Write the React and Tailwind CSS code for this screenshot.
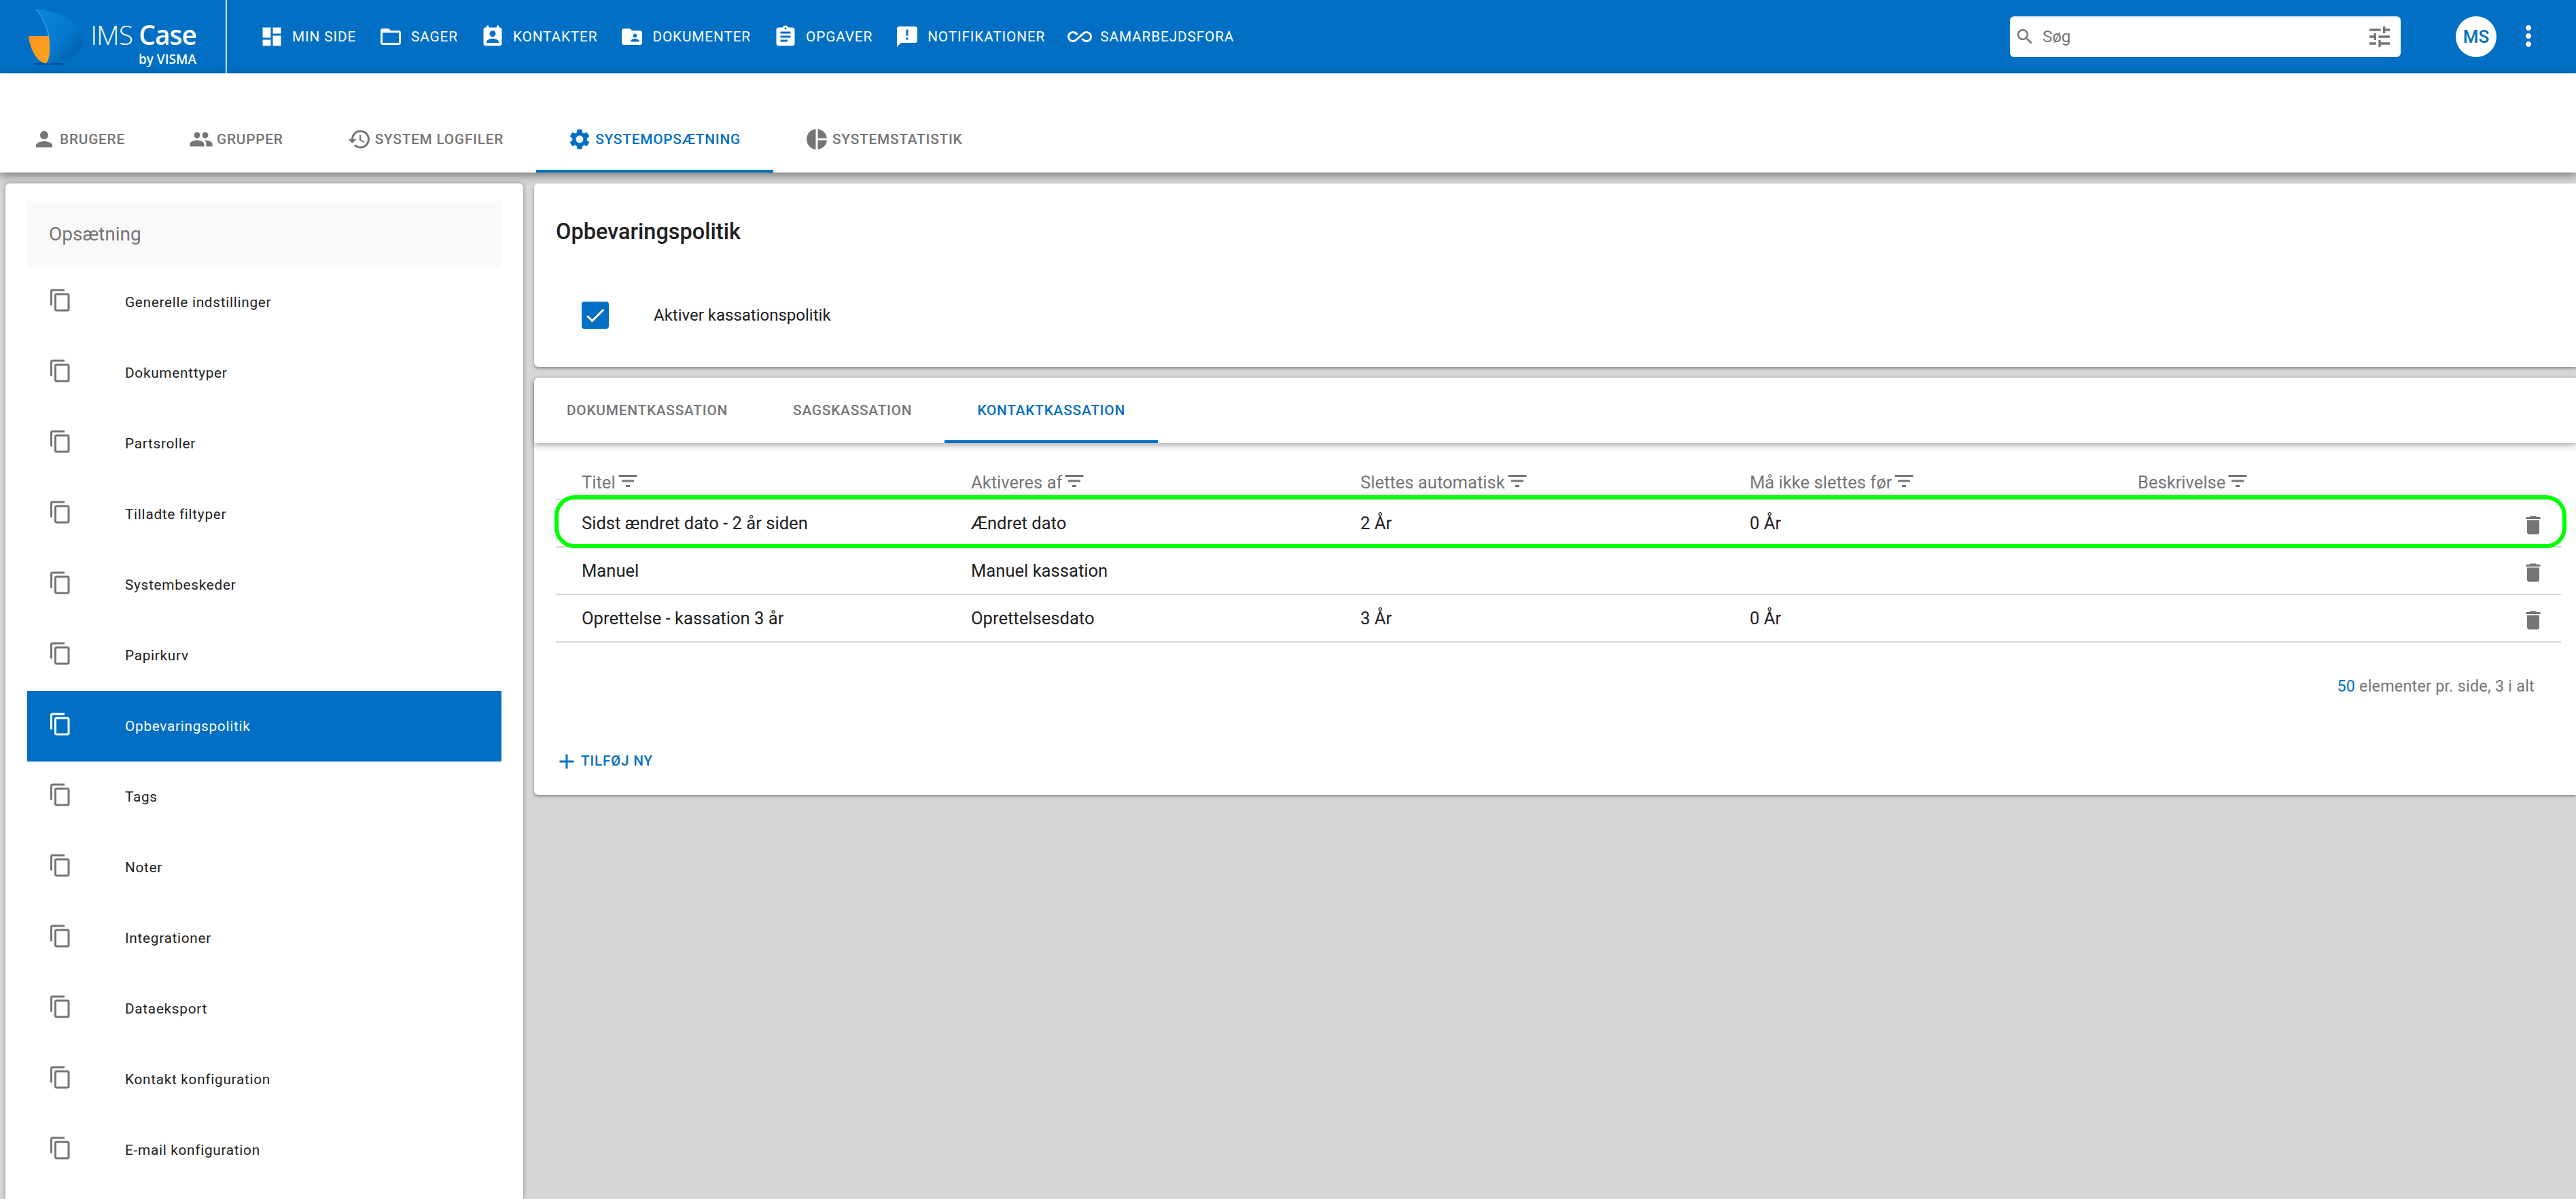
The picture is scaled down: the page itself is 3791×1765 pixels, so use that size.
import React from "react";

const P = {
  dashboard: "M3 13h8V3H3v10zm0 8h8v-6H3v6zm10 0h8V11h-8v10zm0-18v6h8V3h-8z",
  folder: "M20 6h-8l-2-2H4c-1.1 0-1.99.9-1.99 2L2 18c0 1.1.9 2 2 2h16c1.1 0 2-.9 2-2V8c0-1.1-.9-2-2-2zm0 12H4V8h16v10z",
  contact: "M19 3h-1V1h-2v2H8V1H6v2H5c-1.11 0-2 .9-2 2v14c0 1.1.89 2 2 2h14c1.1 0 2-.9 2-2V5c0-1.1-.9-2-2-2zm-7 3c1.66 0 3 1.34 3 3s-1.34 3-3 3-3-1.34-3-3 1.34-3 3-3zm6 12H6v-1c0-2 4-3.1 6-3.1s6 1.1 6 3.1v1z",
  shared: "M20 6h-8l-2-2H4c-1.1 0-1.99.9-1.99 2L2 18c0 1.1.9 2 2 2h16c1.1 0 2-.9 2-2V8c0-1.1-.9-2-2-2zm-5 3c1.1 0 2 .9 2 2s-.9 2-2 2-2-.9-2-2 .9-2 2-2zm4 8h-8v-1c0-1.33 2.67-2 4-2s4 .67 4 2v1z",
  assignment: "M19 3h-4.18C14.4 1.84 13.3 1 12 1c-1.3 0-2.4.84-2.82 2H5c-1.1 0-2 .9-2 2v14c0 1.1.9 2 2 2h14c1.1 0 2-.9 2-2V5c0-1.1-.9-2-2-2zm-7 0c.55 0 1 .45 1 1s-.45 1-1 1-1-.45-1-1 .45-1 1-1zm2 14H7v-2h7v2zm3-4H7v-2h10v2zm0-4H7V7h10v2z",
  announcement: "M20 2H4c-1.1 0-1.99.9-1.99 2L2 22l4-4h14c1.1 0 2-.9 2-2V4c0-1.1-.9-2-2-2zm-7 9h-2V5h2v6zm0 4h-2v-2h2v2z",
  infinity: "M18.6 6.62c-1.44 0-2.8.56-3.77 1.53L12 10.66 10.48 12h.01L7.8 14.39c-.64.64-1.49.99-2.4.99-1.87 0-3.39-1.51-3.39-3.38S3.53 8.62 5.4 8.62c.91 0 1.76.35 2.44 1.03l1.13 1 1.51-1.34L9.22 8.2C8.2 7.18 6.84 6.62 5.4 6.62 2.42 6.62 0 9.04 0 12s2.42 5.38 5.4 5.38c1.44 0 2.8-.56 3.77-1.53l2.83-2.5.01.01L13.52 12h-.01l2.69-2.39c.64-.64 1.49-.99 2.4-.99 1.87 0 3.39 1.51 3.39 3.38s-1.52 3.38-3.39 3.38c-.9 0-1.76-.35-2.44-1.03l-1.14-1.01-1.51 1.34 1.27 1.12c1.02 1.01 2.37 1.57 3.82 1.57 2.98 0 5.4-2.41 5.4-5.38s-2.42-5.37-5.4-5.37z",
  person: "M12 12c2.21 0 4-1.79 4-4s-1.79-4-4-4-4 1.79-4 4 1.79 4 4 4zm0 2c-2.67 0-8 1.34-8 4v2h16v-2c0-2.66-5.33-4-8-4z",
  group: "M16 11c1.66 0 2.99-1.34 2.99-3S17.66 5 16 5c-1.66 0-3 1.34-3 3s1.34 3 3 3zm-8 0c1.66 0 2.99-1.34 2.99-3S9.66 5 8 5C6.34 5 5 6.34 5 8s1.34 3 3 3zm0 2c-2.33 0-7 1.17-7 3.5V19h14v-2.5c0-2.33-4.67-3.5-7-3.5zm8 0c-.29 0-.62.02-.97.05 1.16.84 1.97 1.97 1.97 3.45V19h6v-2.5c0-2.33-4.67-3.5-7-3.5z",
  history: "M13 3c-4.97 0-9 4.03-9 9H1l3.89 3.89.07.14L9 12H6c0-3.87 3.13-7 7-7s7 3.13 7 7-3.13 7-7 7c-1.93 0-3.68-.79-4.94-2.06l-1.42 1.42C8.27 19.99 10.51 21 13 21c4.97 0 9-4.03 9-9s-4.03-9-9-9zm-1 5v5l4.28 2.54.72-1.21-3.5-2.08V8H12z",
  settings: "M19.14 12.94c.04-.3.06-.61.06-.94 0-.32-.02-.64-.07-.94l2.03-1.58c.18-.14.23-.41.12-.61l-1.92-3.32c-.12-.22-.37-.29-.59-.22l-2.39.96c-.5-.38-1.03-.7-1.62-.94l-.36-2.54c-.04-.24-.24-.41-.48-.41h-3.84c-.24 0-.43.17-.47.41l-.36 2.54c-.59.24-1.13.57-1.62.94l-2.39-.96c-.22-.08-.47 0-.59.22L2.74 8.87c-.12.21-.08.47.12.61l2.03 1.58c-.05.3-.09.63-.09.94s.02.64.07.94l-2.03 1.58c-.18.14-.23.41-.12.61l1.92 3.32c.12.22.37.29.59.22l2.39-.96c.5.38 1.03.7 1.62.94l.36 2.54c.05.24.24.41.48.41h3.84c.24 0 .44-.17.47-.41l.36-2.54c.59-.24 1.13-.56 1.62-.94l2.39.96c.22.08.47 0 .59-.22l1.92-3.32c.12-.22.07-.47-.12-.61l-2.01-1.58zM12 15.6c-1.98 0-3.6-1.62-3.6-3.6s1.62-3.6 3.6-3.6 3.6 1.62 3.6 3.6-1.62 3.6-3.6 3.6z",
  pie: "M11 2v20c-5.07-.5-9-4.79-9-10s3.93-9.5 9-10zm2.03 0v8.99H22c-.47-4.74-4.24-8.52-8.97-8.99zm0 11.01V22c4.74-.47 8.5-4.25 8.97-8.99h-8.97z",
  search: "M15.5 14h-.79l-.28-.27C15.41 12.59 16 11.11 16 9.5 16 5.91 13.09 3 9.5 3S3 5.91 3 9.5 5.91 16 9.5 16c1.61 0 3.09-.59 4.23-1.57l.27.28v.79l5 4.99L20.49 19l-4.99-5zm-6 0C7.01 14 5 11.99 5 9.5S7.01 5 9.5 5 14 7.01 14 9.5 11.99 14 9.5 14z",
  tune: "M3 17v2h6v-2H3zM3 5v2h10V5H3zm10 16v-2h8v-2h-8v-2h-2v6h2zM7 9v2H3v2h4v2h2V9H7zm14 4v-2H11v2h10zm-6-4h2V7h4V5h-4V3h-2v6z",
  more: "M12 8c1.1 0 2-.9 2-2s-.9-2-2-2-2 .9-2 2 .9 2 2 2zm0 2c-1.1 0-2 .9-2 2s.9 2 2 2 2-.9 2-2-.9-2-2-2zm0 6c-1.1 0-2 .9-2 2s.9 2 2 2 2-.9 2-2-.9-2-2-2z",
  filter: "M10 18h4v-2h-4v2zM3 6v2h18V6H3zm3 7h12v-2H6v2z",
  del: "M6 19c0 1.1.9 2 2 2h8c1.1 0 2-.9 2-2V7H6v12zM19 4h-3.5l-1-1h-5l-1 1H5v2h14V4z",
  add: "M19 13h-6v6h-2v-6H5v-2h6V5h2v6h6v2z",
  copy: "M16 1H4c-1.1 0-2 .9-2 2v14h2V3h12V1zm3 4H8c-1.1 0-2 .9-2 2v14c0 1.1.9 2 2 2h11c1.1 0 2-.9 2-2V7c0-1.1-.9-2-2-2zm0 16H8V7h11v14z",
  check: "M9 16.17L4.83 12l-1.42 1.41L9 19 21 7l-1.41-1.41z",
};

function Icon({ d, className = "w-9 h-9" }) {
  return (
    <svg viewBox="0 0 24 24" fill="currentColor" className={`shrink-0 ${className}`}>
      <path d={d} />
    </svg>
  );
}

const nav = [
  ["dashboard", "MIN SIDE"],
  ["folder", "SAGER"],
  ["contact", "KONTAKTER"],
  ["shared", "DOKUMENTER"],
  ["assignment", "OPGAVER"],
  ["announcement", "NOTIFIKATIONER"],
  ["infinity", "SAMARBEJDSFORA"],
];

const topTabs = [
  ["person", "BRUGERE"],
  ["group", "GRUPPER"],
  ["history", "SYSTEM LOGFILER"],
  ["settings", "SYSTEMOPSÆTNING", true],
  ["pie", "SYSTEMSTATISTIK"],
];

const side = [
  "Generelle indstillinger",
  "Dokumenttyper",
  "Partsroller",
  "Tilladte filtyper",
  "Systembeskeder",
  "Papirkurv",
  "Opbevaringspolitik",
  "Tags",
  "Noter",
  "Integrationer",
  "Dataeksport",
  "Kontakt konfiguration",
  "E-mail konfiguration",
];

const cols = ["Titel", "Aktiveres af", "Slettes automatisk", "Må ikke slettes før", "Beskrivelse"];
const rows = [
  ["Sidst ændret dato - 2 år siden", "Ændret dato", "2 År", "0 År", ""],
  ["Manuel", "Manuel kassation", "", "", ""],
  ["Oprettelse - kassation 3 år", "Oprettelsesdato", "3 År", "0 År", ""],
];

function Logo() {
  return (
    <svg viewBox="0 0 132 108" className="w-[132px] h-[108px] shrink-0">
      <defs>
        <linearGradient id="sail" x1="0" y1="0" x2="1" y2="1">
          <stop offset="0" stopColor="#0a86dc" />
          <stop offset="0.55" stopColor="#0478cc" />
          <stop offset="1" stopColor="#00589f" />
        </linearGradient>
        <linearGradient id="orange" x1="0" y1="0" x2="1" y2="1">
          <stop offset="0" stopColor="#f7931e" />
          <stop offset="1" stopColor="#ffa31f" />
        </linearGradient>
      </defs>
      <ellipse cx="72" cy="94" rx="24" ry="1.6" fill="#004f8f" />
      <path d="M53 13 C 90 17 122 32 122 62 C 122 80 96 92 70 94 C 75 70 72 40 53 13 Z" fill="url(#sail)" />
      <path d="M53 13 C 63 27 69 40 72 53" fill="none" stroke="#5db4ee" strokeWidth="0.8" />
      <path d="M42 53 L72 53 C 74 70 74 86 68 93.5 C 54 92 44 72 42 53 Z" fill="url(#orange)" />
    </svg>
  );
}

export default function App() {
  return (
    <div className="w-screen h-screen overflow-hidden flex flex-col bg-[#d6d6d6] font-['Roboto',sans-serif]">
      <header className="h-[108px] shrink-0 bg-[#006fc4] flex items-center text-white">
        <div className="w-[334px] h-full shrink-0 flex border-r-2 border-[#cfe3f3]">
          <Logo />
          <div className="flex flex-col items-end w-[157px] font-['Open_Sans',sans-serif] pt-[26px]">
            <div className="text-[39px] leading-[50px] whitespace-nowrap tracking-[-1px]">
              <span className="font-light">IMS </span>
              <span className="font-semibold">Case</span>
            </div>
            <div className="text-[19px] leading-[22px] font-semibold whitespace-nowrap">by VISMA</div>
          </div>
        </div>
        <nav className="flex items-center gap-[33px] pl-[48px]">
          {nav.map(([i, t]) => (
            <div key={t} className="flex items-center gap-3">
              <Icon d={P[i]} />
              <span className="text-[20.8px] tracking-[0.85px] leading-none">{t}</span>
            </div>
          ))}
        </nav>
        <div className="ml-auto flex items-center">
          <div className="w-[575px] h-[60px] bg-white rounded-[6px] flex items-center pl-[7px] pr-[11px] text-[#757575] shadow-[inset_0_3px_3px_-2px_rgba(0,0,0,0.12)]">
            <Icon d={P.search} className="w-[30px] h-[30px]" />
            <input
              placeholder="Søg"
              className="flex-1 ml-[11px] min-w-0 text-[24px] outline-none bg-transparent placeholder:text-[#757575]"
            />
            <Icon d={P.tune} className="w-10 h-10" />
          </div>
          <div className="ml-[81px] w-[60px] h-[60px] rounded-full bg-white text-[#006fc4] flex items-center justify-center text-[26px] font-medium">
            MS
          </div>
          <Icon d={P.more} className="w-12 h-12 ml-[23px] mr-[46px] -mt-[3px]" />
        </div>
      </header>

      <div className="h-[146px] shrink-0 bg-white pt-[48px] pl-px flex shadow-[0_4px_12px_rgba(0,0,0,0.45)] relative z-10">
        {topTabs.map(([i, t, active]) => (
          <div
            key={t}
            className={`h-[98px] pl-[46px] pr-[48px] flex items-center gap-[5px] border-b-4 pt-1 ${
              active ? "border-[#006fc4] text-[#006fc4]" : "border-transparent text-[#757575]"
            }`}
          >
            <Icon d={P[i]} />
            <span className="text-[20.8px] font-medium tracking-[0.77px] leading-none">{t}</span>
          </div>
        ))}
      </div>

      <main className="flex-1 min-h-0 flex gap-4 pt-4 pl-2 items-stretch">
        <aside className="w-[762px] shrink-0 bg-white rounded-t-[6px] px-8 pt-[26px] shadow-[0_0_6px_rgba(0,0,0,0.35)]">
          <div className="h-[97px] bg-[#f9f9f9] flex items-center pl-8 text-[28px] text-[#757575]">Opsætning</div>
          {side.map((t) => {
            const on = t === "Opbevaringspolitik";
            return (
              <div key={t} className={`h-[104px] flex items-center pl-[31px] ${on ? "bg-[#006fc4] text-white" : "text-[#212121]"}`}>
                <Icon d={P.copy} className={`w-9 h-9 -mt-[6px] ${on ? "text-white" : "text-[#757575]"}`} />
                <span className="ml-[77px] mt-[2px] text-[20.8px] tracking-[0.7px]">{t}</span>
              </div>
            );
          })}
        </aside>

        <section className="flex-1 min-w-0 flex flex-col gap-4">
          <div className="h-[270px] bg-white rounded-l-[6px] shadow-[0_2px_4px_rgba(0,0,0,0.4)] pl-[32px] flex flex-col">
            <h1 className="mt-[49px] text-[32.5px] leading-[44px] font-medium text-[#212121]">Opbevaringspolitik</h1>
            <div className="mt-[81px] flex items-center pl-[38px]">
              <div className="w-10 h-10 rounded-[4px] bg-[#006fc4] text-white flex items-center justify-center">
                <Icon d={P.check} className="w-9 h-9" />
              </div>
              <span className="ml-[66px] text-[24px] text-[#212121]">Aktiver kassationspolitik</span>
            </div>
          </div>

          <div className="h-[614px] bg-white rounded-l-[6px] shadow-[0_2px_4px_rgba(0,0,0,0.4)] flex flex-col">
            <div className="h-[96px] shrink-0 flex shadow-[0_4px_8px_rgba(0,0,0,0.3)] rounded-tl-[6px]">
              {["DOKUMENTKASSATION", "SAGSKASSATION", "KONTAKTKASSATION"].map((t) => {
                const on = t === "KONTAKTKASSATION";
                return (
                  <div
                    key={t}
                    className={`px-12 flex items-center border-b-4 pt-[6px] text-[20.8px] font-medium tracking-[0.77px] ${
                      on ? "border-[#006fc4] text-[#006fc4]" : "border-transparent text-[#757575]"
                    }`}
                  >
                    {t}
                  </div>
                );
              })}
            </div>

            <div className="ml-[32px] mr-[22px]">
              <div className="h-[84px] pt-[33px] grid grid-cols-[573px_573px_573px_571px_1fr] border-b-2 border-[#d6d6d6] pl-[38px] text-[#757575]">
                {cols.map((c) => (
                  <div key={c} className="flex items-center h-[50px] text-[25.6px]">
                    {c}
                    <Icon d={P.filter} className="w-9 h-9 -mt-1" />
                  </div>
                ))}
              </div>
              {rows.map((r, idx) => (
                <div key={idx} className="relative h-[70px] pt-px grid grid-cols-[573px_573px_573px_571px_1fr] items-center border-b-2 border-[#d6d6d6] pl-[38px] text-[25.6px] text-[#212121]">
                  {r.map((c, j) => (
                    <div key={j}>{c}</div>
                  ))}
                  <Icon d={P.del} className="absolute right-[23px] top-[19px] w-9 h-9 text-[#757575]" />
                  {idx === 0 && (
                    <div className="absolute -left-[2px] -right-[8px] -top-[7px] -bottom-[3px] border-[6px] border-[#00ff00] rounded-[30px] pointer-events-none" />
                  )}
                </div>
              ))}
              <div className="mt-[44px] h-10 flex items-center justify-end pr-[39px] text-[23.2px] tracking-[0.3px] text-[#757575]">
                <span className="text-[#006fc4]">50</span>
                <span className="ml-[6px]">elementer pr. side, 3 i alt</span>
              </div>
              <div className="mt-[71px] h-10 flex items-center text-[#006fc4]">
                <Icon d={P.add} className="w-9 h-9 -ml-[2px]" />
                <span className="ml-[3px] text-[20.8px] font-medium tracking-[0.7px]">TILFØJ NY</span>
              </div>
            </div>
          </div>
        </section>
      </main>
    </div>
  );
}
